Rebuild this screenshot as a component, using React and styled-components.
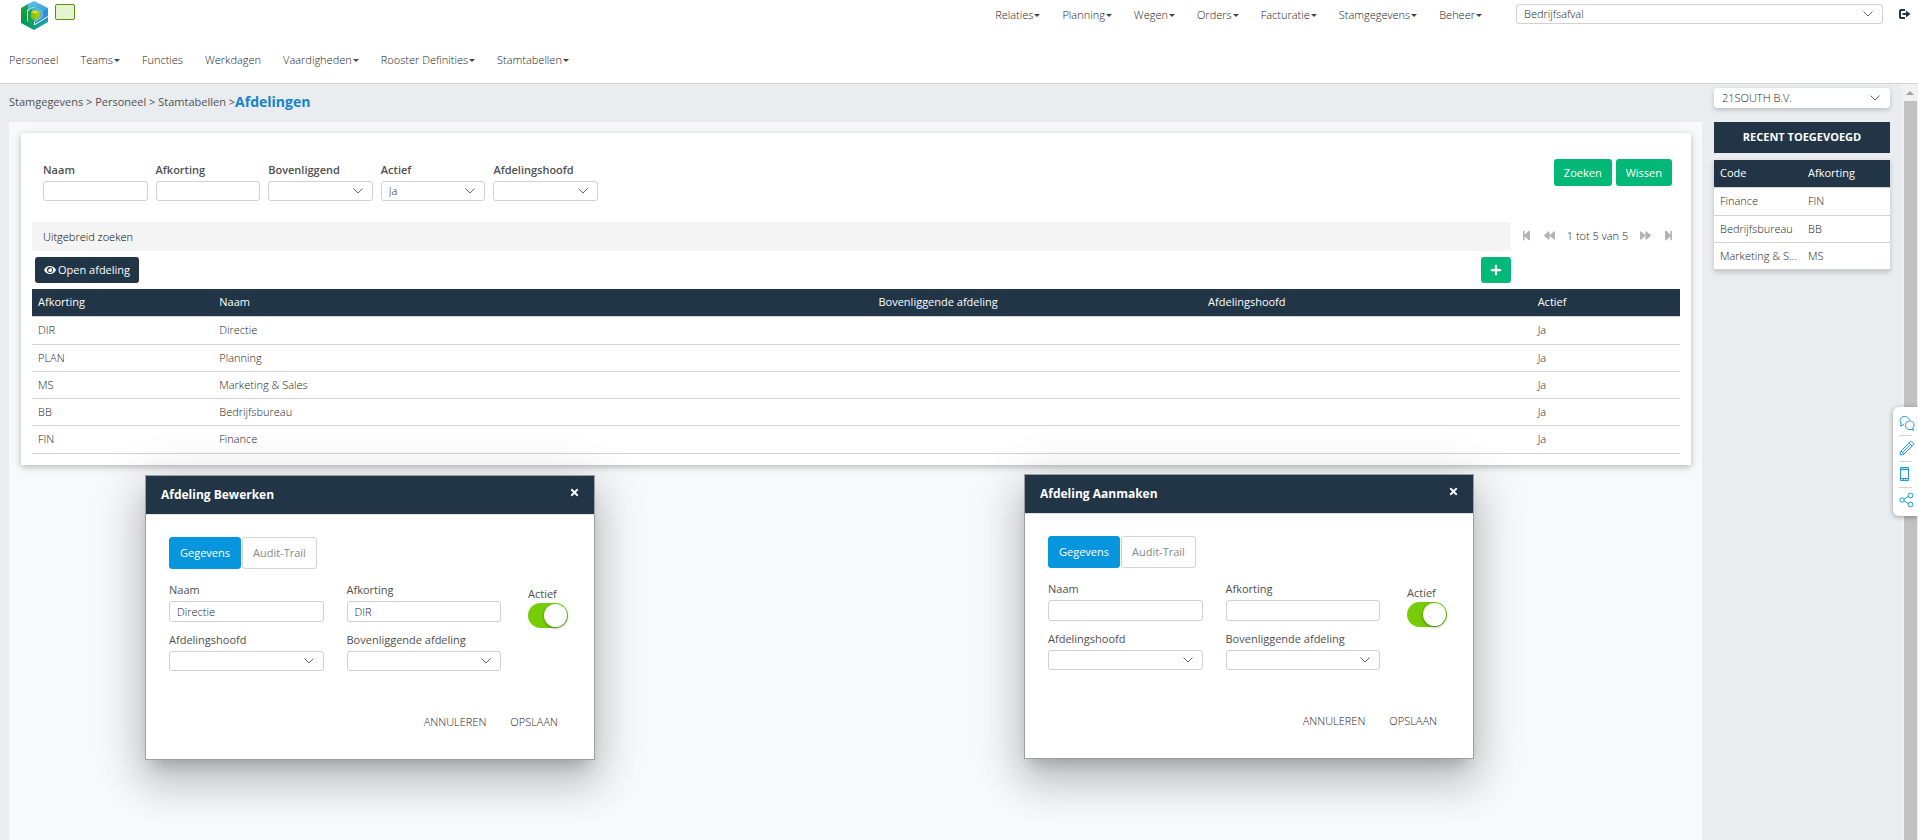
import React, { useId } from 'react';
import styled, { createGlobalStyle, css } from 'styled-components';
import { FaEye, FaPlus, FaTimes, FaForward, FaBackward, FaStepForward, FaStepBackward } from 'react-icons/fa';

const navy = '#213547';
const green = '#04b977';
const line = '#d3d3d3';
const text = '#1c1c1c';
const muted = '#505050';

const GlobalStyle = createGlobalStyle`
  * {
    box-sizing: border-box;
  }
  body {
    margin: 0;
    background: #e9edf0;
  }
  body, button, input, select {
    font-family: 'Open Sans', 'Liberation Sans', sans-serif;
    font-size: 11px;
    font-weight: 300;
    line-height: 16px;
    color: ${text};
  }
  button {
    padding: 0;
    border: 0;
    background: none;
    cursor: pointer;
  }
  a {
    color: inherit;
    text-decoration: none;
  }
`;

const Page = styled.div`
  display: flex;
  flex-direction: column;
  min-height: 100vh;
`;

const Header = styled.header`
  background: #fff;
  border-bottom: 1px solid ${line};
`;

const TopBar = styled.div`
  display: flex;
  align-items: flex-start;
  height: 52px;
  padding: 0 7px 0 20px;
`;

const Brand = styled.div`
  display: flex;
  gap: 6px;
  flex: 1;
`;

const Status = styled.span`
  width: 20px;
  height: 16px;
  margin-top: 4px;
  background: #e4f4cf;
  border: 1px solid #5a9010;
  border-radius: 2px;
`;

const Nav = styled.nav`
  display: flex;
  gap: 22px;
  padding: ${({ $sub }) => ($sub ? '0 9px 15px' : '7px 34px 0 0')};
`;

const NavLink = styled.a`
  display: flex;
  align-items: center;
  ${({ $caret }) => $caret && css`
    &::after {
      content: '';
      margin-left: 1px;
      border: 3px solid transparent;
      border-top-color: #444;
      border-bottom: 0;
    }
  `}
`;

const CompanyPicker = styled.div`
  width: 367px;
  padding-top: 4px;
`;

const Logout = styled.button`
  display: flex;
  margin: 8px 0 0 15px;
`;

const Body = styled.div`
  display: flex;
  flex: 1;
`;

const Main = styled.main`
  display: flex;
  flex-direction: column;
  flex: 1;
  min-width: 0;
  padding-left: 9px;
`;

const Breadcrumb = styled.div`
  display: flex;
  align-items: center;
  height: 38px;
  padding-bottom: 3px;
  color: ${muted};
  font-weight: 400;
  white-space: pre;
`;

const Current = styled.strong`
  font-size: 14px;
  font-weight: 700;
  color: #1583cb;
`;

const Canvas = styled.section`
  position: relative;
  flex: 1;
  padding: 11px 11px 0 12px;
  background: #f8f9fb;
`;

const Card = styled.div`
  padding: 26px 11px 11px;
  background: #fff;
  box-shadow: 0 2px 5px rgba(0, 0, 0, 0.16), 0 2px 10px rgba(0, 0, 0, 0.12);
`;

const SearchForm = styled.form`
  display: flex;
  justify-content: space-between;
  align-items: flex-start;
  padding: 0 8px 0 11px;
  margin-bottom: 21px;
`;

const Filters = styled.div`
  display: grid;
  grid-template-columns: repeat(5, 1fr);
  gap: 8px;
  width: 555px;
  padding-top: 3px;
`;

const FieldBox = styled.div`
  display: flex;
  flex-direction: column;
  gap: 3px;
  min-width: 0;
`;

const Label = styled.label`
  color: ${muted};
  font-weight: ${({ $bold }) => ($bold ? 600 : 400)};
`;

const box = css`
  width: 100%;
  height: 20px;
  padding: 0 7px;
  border: 1px solid #d0d0d0;
  border-radius: 3px;
  background: #fff;
  outline: none;
`;

const Input = styled.input`
  ${box}
`;

const SelectBox = styled.div`
  display: grid;
  align-items: center;
  & > * {
    grid-area: 1 / 1;
  }
  & > svg {
    justify-self: end;
    margin-right: 10px;
    pointer-events: none;
  }
`;

const NativeSelect = styled.select`
  ${box}
  appearance: none;
  ${({ $raised }) => $raised && css`
    border-color: #fff;
    box-shadow: 0 2px 5px rgba(0, 0, 0, 0.2);
  `}
`;

const ButtonRow = styled.div`
  display: flex;
  gap: 4px;
`;

const Button = styled.button`
  display: flex;
  align-items: center;
  justify-content: center;
  gap: 2px;
  height: ${({ $small }) => ($small ? 26 : 27)}px;
  padding: 0 ${({ $small }) => ($small ? 9 : 10)}px;
  border-radius: 3px;
  background: ${({ $color }) => $color};
  color: #fff;
  font-weight: 400;
`;

const Advanced = styled.div`
  display: flex;
  align-items: center;
`;

const AdvancedToggle = styled.button`
  flex: 1;
  height: 29px;
  padding-left: 11px;
  background: #f4f4f4;
  color: #000;
  text-align: left;
`;

const Pager = styled.div`
  display: flex;
  align-items: center;
  justify-content: space-between;
  width: 169px;
  padding: 0 6px 2px 10px;
  button {
    display: flex;
    color: #b2b2b2;
  }
`;

const Toolbar = styled.div`
  display: flex;
  justify-content: space-between;
  padding: 6px 169px 6px 3px;
`;

const Table = styled.table`
  width: 100%;
  table-layout: fixed;
  border-collapse: collapse;
  background: #fff;
  th, td {
    height: 27px;
    padding: 0 0 0 6px;
    border-bottom: 1px solid ${line};
    text-align: left;
    white-space: nowrap;
    overflow: hidden;
    text-overflow: ellipsis;
  }
  th {
    background: ${navy};
    color: #fff;
    font-weight: 400;
  }
  tr:first-child td {
    height: 28px;
  }
  ${({ $raised }) => ($raised ? css`
    box-shadow: 0 2px 5px rgba(0, 0, 0, 0.2);
  ` : css`
    tr:last-child td {
      height: 28px;
    }
  `)}
`;

const Side = styled.aside`
  display: flex;
  flex-direction: column;
  width: 200px;
  padding: 4px 12px 0;
`;

const SideTitle = styled.h2`
  margin: 14px 0 7px;
  padding: 7px 0 8px;
  background: ${navy};
  color: #fff;
  font-size: 11px;
  font-weight: 700;
  text-align: center;
`;

const Track = styled.div`
  display: flex;
  flex-direction: column;
  align-items: center;
  width: 16px;
  padding-top: 7px;
  background: #f1f1f1;
`;

const Arrow = styled.span`
  border: 4px solid transparent;
  border-top: 0;
  border-bottom-color: #a3a3a3;
  margin-bottom: 6px;
`;

const Thumb = styled.div`
  flex: 1;
  width: 13px;
  background: #c1c1c1;
`;

const QuickMenu = styled.div`
  position: fixed;
  top: 407px;
  right: 0;
  display: flex;
  flex-direction: column;
  width: 25px;
  padding: 3px 0 3px 6px;
  border-radius: 6px 0 0 6px;
  background: #fff;
  box-shadow: 0 1px 5px rgba(0, 0, 0, 0.35);
  button {
    display: flex;
    align-items: center;
    height: 25px;
  }
  button + button {
    height: 26px;
    background: linear-gradient(${line}, ${line}) 0 0 / 13px 1px no-repeat;
  }
`;

const Dialog = styled.div`
  position: absolute;
  top: ${({ $top }) => $top}px;
  left: ${({ $left }) => $left}px;
  width: 450px;
  border: 1px solid #9c9fa2;
  background: #fff;
  box-shadow: 0 11px 15px -7px rgba(0, 0, 0, 0.2), 0 24px 38px 3px rgba(0, 0, 0, 0.14),
    0 9px 46px 8px rgba(0, 0, 0, 0.12);
`;

const DialogHeader = styled.div`
  display: flex;
  justify-content: space-between;
  height: 39px;
  padding: 11px 14px 0 15px;
  background: ${navy};
  border-bottom: 1px solid #dfe2e5;
  color: #fff;
  button {
    display: flex;
    height: 11px;
    color: #fff;
  }
`;

const DialogTitle = styled.h3`
  margin: 0;
  font-size: 12px;
  font-weight: 700;
`;

const Tabs = styled.div`
  display: flex;
  gap: 1px;
  padding: 22px 23px 13px;
`;

const Tab = styled.button`
  height: 32px;
  padding: 0 10px;
  border: 1px solid ${({ $active }) => ($active ? '#0795dd' : line)};
  border-radius: 3px;
  background: ${({ $active }) => ($active ? '#0795dd' : '#fff')};
  color: ${({ $active }) => ($active ? '#fff' : '#888')};
  font-weight: ${({ $active }) => ($active ? 500 : 400)};
`;

const DialogBody = styled.div`
  display: flex;
  gap: 27px;
  padding: 0 22px 0 23px;
`;

const DialogFields = styled.div`
  display: grid;
  grid-template-columns: 1fr 1fr;
  gap: 10px 23px;
  flex: 1;
  input {
    height: 21px;
  }
`;

const SwitchField = styled.div`
  display: flex;
  flex-direction: column;
  width: 44px;
  padding-top: 4px;
`;

const Switch = styled.input`
  appearance: none;
  width: 40px;
  height: 25px;
  margin: 1px 0 0;
  border-radius: 13px;
  background: #76cc06;
  cursor: pointer;
  &::before {
    content: '';
    display: block;
    width: 23px;
    height: 23px;
    margin: 1px 1px 1px 16px;
    border-radius: 50%;
    background: #fff;
    box-shadow: 0 1px 3px rgba(0, 0, 0, 0.4);
  }
  &:not(:checked) {
    background: #ccc;
  }
  &:not(:checked)::before {
    margin-left: 1px;
  }
`;

const DialogFooter = styled.div`
  display: flex;
  justify-content: flex-end;
  gap: 24px;
  padding: 43px 36px 29px;
`;

const Logo = () => (
  <svg width="29" height="30" viewBox="0 0 29 30" aria-label="Logo">
    <defs>
      <linearGradient id="logoGreen" x1="0" y1="0" x2="0" y2="1">
        <stop offset="0" stopColor="#1fa548" />
        <stop offset="1" stopColor="#0a8f3c" />
      </linearGradient>
      <linearGradient id="logoTeal" x1="0" y1="0" x2="1" y2="0">
        <stop offset="0" stopColor="#009a4d" />
        <stop offset="1" stopColor="#14a3b4" />
      </linearGradient>
      <linearGradient id="logoBlue" x1="0" y1="0" x2="1" y2="1">
        <stop offset="0" stopColor="#5fc4e8" />
        <stop offset="1" stopColor="#2c93d8" />
      </linearGradient>
    </defs>
    <path d="M1 8 9 3.500v5L7 10v15l-6-3z" fill="url(#logoGreen)" />
    <path d="M8 4 14 1 28 8v5l-6 4V11l-8-4-6 3z" fill="url(#logoBlue)" />
    <path d="M22 12l6-3v7l-13 8v-5l7-4z" fill="#2f8fdc" />
    <path d="M1 20l6-2v3l8 4 13-8v5l-14 8-13-7z" fill="url(#logoTeal)" />
    <path d="M8 11l6-4 8 4v6l-8 5v3l-6-3z" fill="#3fb6c9" />
    <path d="M8 11l4-3v11l2 1v5l-6-3z" fill="#1b9f55" />
    <path d="M11 12l4-2 5 2v5l-5 3-4-2z" fill="#8fbc10" />
    <path d="M11 12l4-2 5 2-5 2z" fill="#d8df20" />
    <path d="M15 14l5-2v5l-5 3z" fill="#a9c80c" />
    <path d="M7.500 21V10.500L14 7M22 11.500V17l-7 4.500" fill="none" stroke="#a9e2e0" strokeWidth="0.7" />
  </svg>
);

const Chevron = () => (
  <svg width="10" height="6" viewBox="0 0 10 6" fill="none" stroke="#666">
    <path d="M0.5 0.5 5 5 9.5 0.5" />
  </svg>
);

const LogoutIcon = () => (
  <svg width="13" height="12" viewBox="0 0 13 12" fill="none" stroke={navy} strokeWidth="2">
    <path d="M7 2H3a1 1 0 0 0-1 1v6a1 1 0 0 0 1 1h4" />
    <path d="M4.500 6H9" />
    <path d="M8 2.500l4.500 3.500L8 9.500z" fill={navy} stroke="none" />
  </svg>
);

const QuickIcon = ({ children }) => (
  <svg width="16" height="16" viewBox="0 0 16 16" fill="none" stroke="#1b9ddb">
    {children}
  </svg>
);

const Select = ({ options = [''], ...rest }) => (
  <SelectBox>
    <NativeSelect {...rest}>
      {options.map(option => (
        <option key={option}>{option}</option>
      ))}
    </NativeSelect>
    <Chevron />
  </SelectBox>
);

const Field = ({ label, bold, options, value }) => {
  const id = useId();
  return (
    <FieldBox>
      <Label htmlFor={id} $bold={bold}>{label}</Label>
      {options ? <Select id={id} options={options} /> : <Input id={id} defaultValue={value} />}
    </FieldBox>
  );
};

const DepartmentDialog = ({ title, top, left, name, code }) => {
  const id = useId();
  return (
    <Dialog role="dialog" aria-label={title} $top={top} $left={left}>
      <DialogHeader>
        <DialogTitle>{title}</DialogTitle>
        <button type="button" aria-label="Sluiten"><FaTimes size={11} /></button>
      </DialogHeader>
      <Tabs>
        <Tab type="button" $active>Gegevens</Tab>
        <Tab type="button">Audit-Trail</Tab>
      </Tabs>
      <DialogBody>
        <DialogFields>
          <Field label="Naam" value={name} />
          <Field label="Afkorting" value={code} />
          <Field label="Afdelingshoofd" options={['']} />
          <Field label="Bovenliggende afdeling" options={['']} />
        </DialogFields>
        <SwitchField>
          <Label htmlFor={id}>Actief</Label>
          <Switch id={id} type="checkbox" defaultChecked />
        </SwitchField>
      </DialogBody>
      <DialogFooter>
        <button type="button">ANNULEREN</button>
        <button type="button">OPSLAAN</button>
      </DialogFooter>
    </Dialog>
  );
};

const mainNav = ['Relaties', 'Planning', 'Wegen', 'Orders', 'Facturatie', 'Stamgegevens', 'Beheer'];

const subNav = [
  { label: 'Personeel' },
  { label: 'Teams', caret: true },
  { label: 'Functies' },
  { label: 'Werkdagen' },
  { label: 'Vaardigheden', caret: true },
  { label: 'Rooster Definities', caret: true },
  { label: 'Stamtabellen', caret: true },
];

const departments = [
  ['DIR', 'Directie'],
  ['PLAN', 'Planning'],
  ['MS', 'Marketing & Sales'],
  ['BB', 'Bedrijfsbureau'],
  ['FIN', 'Finance'],
];

const recent = [
  ['Finance', 'FIN'],
  ['Bedrijfsbureau', 'BB'],
  ['Marketing & S...', 'MS'],
];

const App = () => (
  <Page>
    <GlobalStyle />
    <Header>
      <TopBar>
        <Brand>
          <Logo />
          <Status />
        </Brand>
        <Nav>
          {mainNav.map(label => (
            <NavLink key={label} href="#" $caret>{label}</NavLink>
          ))}
        </Nav>
        <CompanyPicker>
          <Select aria-label="Bedrijf" options={['Bedrijfsafval']} />
        </CompanyPicker>
        <Logout type="button" aria-label="Uitloggen"><LogoutIcon /></Logout>
      </TopBar>
      <Nav $sub>
        {subNav.map(item => (
          <NavLink key={item.label} href="#" $caret={item.caret}>{item.label}</NavLink>
        ))}
      </Nav>
    </Header>
    <Body>
      <Main>
        <Breadcrumb>
          {'Stamgegevens > Personeel > Stamtabellen >'}
          <Current>Afdelingen</Current>
        </Breadcrumb>
        <Canvas>
          <Card>
            <SearchForm onSubmit={e => e.preventDefault()}>
              <Filters>
                <Field bold label="Naam" />
                <Field bold label="Afkorting" />
                <Field bold label="Bovenliggend" options={['']} />
                <Field bold label="Actief" options={['Ja']} />
                <Field bold label="Afdelingshoofd" options={['']} />
              </Filters>
              <ButtonRow>
                <Button $color={green}>Zoeken</Button>
                <Button type="reset" $color={green}>Wissen</Button>
              </ButtonRow>
            </SearchForm>
            <Advanced>
              <AdvancedToggle type="button">Uitgebreid zoeken</AdvancedToggle>
              <Pager>
                <button type="button" aria-label="Eerste"><FaStepBackward size={11} /></button>
                <button type="button" aria-label="Vorige"><FaBackward size={11} /></button>
                <span>1 tot 5 van 5</span>
                <button type="button" aria-label="Volgende"><FaForward size={11} /></button>
                <button type="button" aria-label="Laatste"><FaStepForward size={11} /></button>
              </Pager>
            </Advanced>
            <Toolbar>
              <Button type="button" $small $color={navy}><FaEye size={12} />Open afdeling</Button>
              <Button type="button" $small $color={green} aria-label="Toevoegen"><FaPlus size={12} /></Button>
            </Toolbar>
            <Table>
              <colgroup>
                <col width="11%" />
                <col width="40%" />
                <col width="20%" />
                <col width="20%" />
                <col width="9%" />
              </colgroup>
              <thead>
                <tr>
                  <th>Afkorting</th>
                  <th>Naam</th>
                  <th>Bovenliggende afdeling</th>
                  <th>Afdelingshoofd</th>
                  <th>Actief</th>
                </tr>
              </thead>
              <tbody>
                {departments.map(([code, name]) => (
                  <tr key={code}>
                    <td>{code}</td>
                    <td>{name}</td>
                    <td />
                    <td />
                    <td>Ja</td>
                  </tr>
                ))}
              </tbody>
            </Table>
          </Card>
          <DepartmentDialog title="Afdeling Bewerken" top={353} left={136} name="Directie" code="DIR" />
          <DepartmentDialog title="Afdeling Aanmaken" top={352} left={1015} />
        </Canvas>
      </Main>
      <Side>
        <Select $raised aria-label="Vestiging" options={['21SOUTH B.V.']} />
        <SideTitle>RECENT TOEGEVOEGD</SideTitle>
        <Table $raised>
          <thead>
            <tr>
              <th>Code</th>
              <th>Afkorting</th>
            </tr>
          </thead>
          <tbody>
            {recent.map(([name, code]) => (
              <tr key={code}>
                <td>{name}</td>
                <td>{code}</td>
              </tr>
            ))}
          </tbody>
        </Table>
      </Side>
      <Track>
        <Arrow />
        <Thumb />
      </Track>
    </Body>
    <QuickMenu>
      <button type="button" aria-label="Chat">
        <QuickIcon>
          <path d="M5 9.500 1.500 11 2 8C0 5 1.500 1.500 5.500 1.500c3 0 4.500 1.500 5 3.500" />
          <path d="M13.500 13.500 15 15l-3-.5c-3 .5-5.500-1-5.500-4s2-4.500 4.500-4.500c4 0 5.500 4.500 2.500 7.500z" />
        </QuickIcon>
      </button>
      <button type="button" aria-label="Bewerken">
        <QuickIcon>
          <path d="M1 15l1-4L11.500 1.500c1-1 4 2 3 3L5 14zM2 11l3 3M10 3l3 3M4 12l8-8" />
        </QuickIcon>
      </button>
      <button type="button" aria-label="Mobiel">
        <QuickIcon>
          <path d="M1.500 1.500h8v13h-8zM1.500 3.500h8M1.500 12.500h8M4 1.500v2M7 1.500v2M4.500 14.500v-2M6.500 14.500v-2" />
        </QuickIcon>
      </button>
      <button type="button" aria-label="Delen">
        <QuickIcon>
          <circle cx="3" cy="8" r="2.200" />
          <circle cx="11.500" cy="3.500" r="2.400" />
          <circle cx="11.500" cy="12.500" r="2.400" />
          <path d="M5 7l4.500-2.500M5 9l4.500 2.500" />
        </QuickIcon>
      </button>
    </QuickMenu>
  </Page>
);

export default App;
